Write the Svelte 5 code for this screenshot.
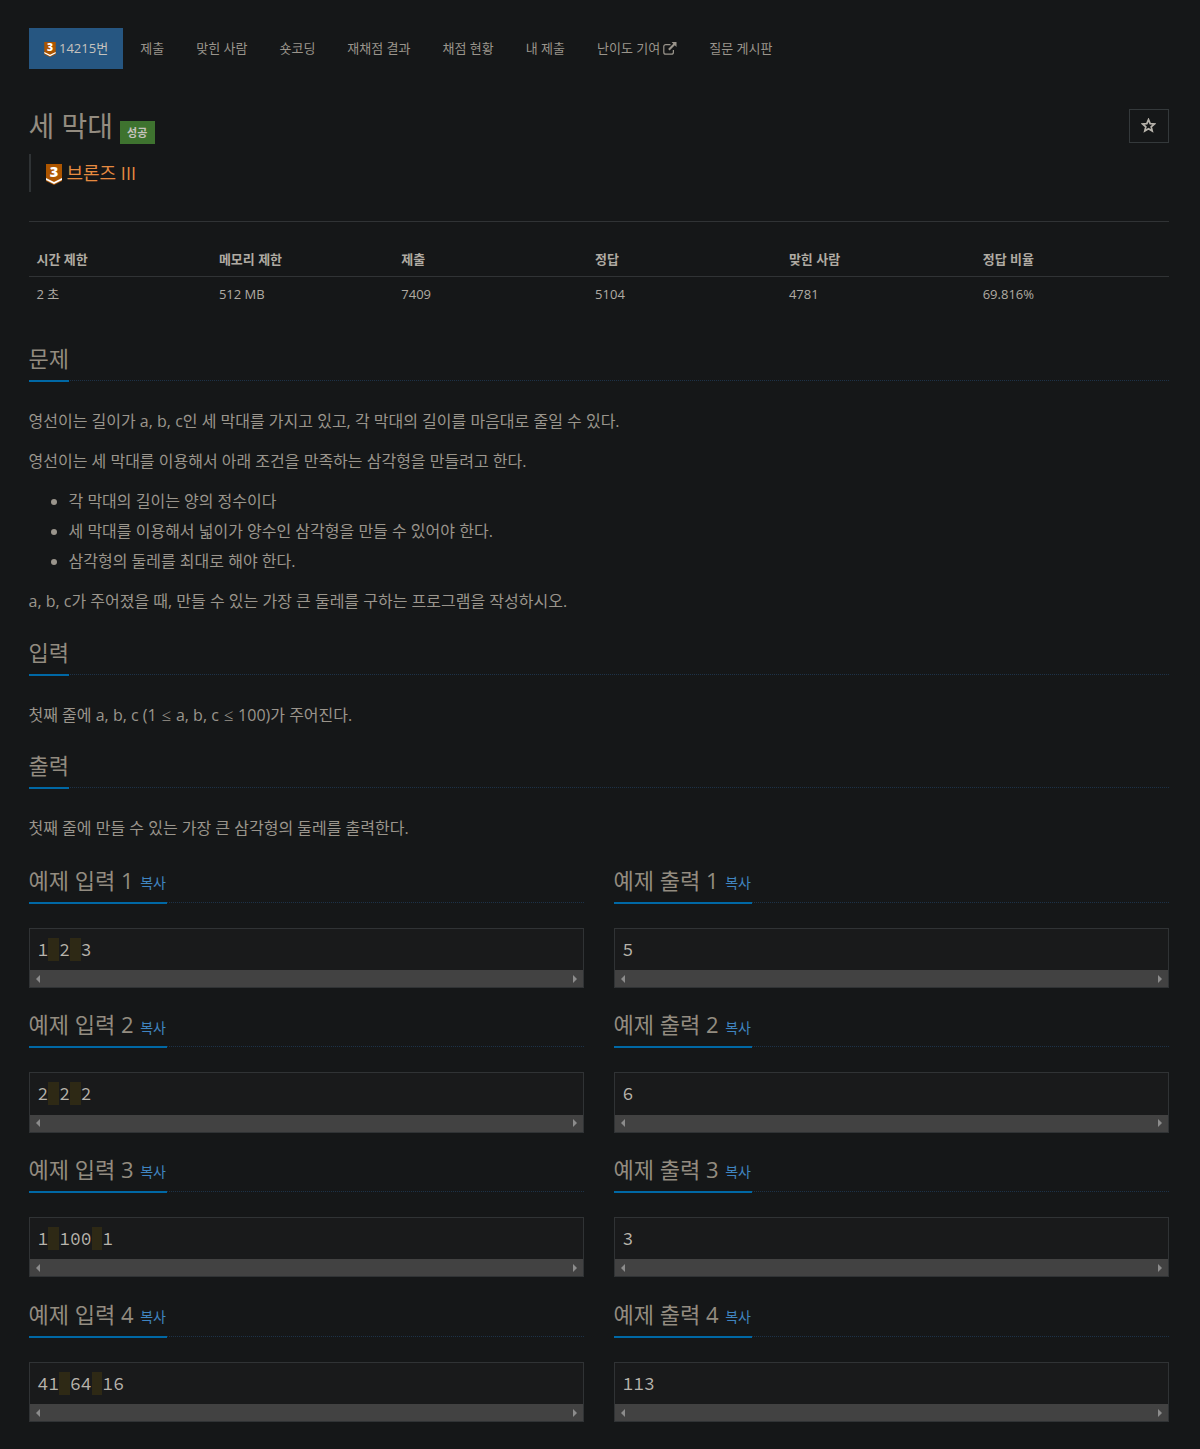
<script>
  const tabs = ['제출', '맞힌 사람', '숏코딩', '재채점 결과', '채점 현황', '내 제출'];
  const stats = [
    ['시간 제한', '2 초'],
    ['메모리 제한', '512 MB'],
    ['제출', '7409'],
    ['정답', '5104'],
    ['맞힌 사람', '4781'],
    ['정답 비율', '69.816%']
  ];
  const samples = [
    ['1 2 3', '5'],
    ['2 2 2', '6'],
    ['1 100 1', '3'],
    ['41 64 16', '113']
  ];
</script>

{#snippet tier()}
  <svg class="tier" viewBox="0 0 16 21">
    <path fill="#ad5600" d="M0 0h16v17l-8 4-8-4z" />
    <path fill="#fff" d="M0 14l8 4 8-4v1.9l-8 4-8-4z" />
    <text x="8" y="13.2" text-anchor="middle">3</text>
  </svg>
{/snippet}

{#snippet sample(kind, n, value)}
  <section class="sample">
    <div class="headline"><h2>예제 {kind} {n} <a>복사</a></h2></div>
    <div class="box">
      <pre>{#each value.split(' ') as part, i}{#if i > 0}<span class="space">{' '}</span>{/if}{part}{/each}</pre>
      <div class="scrollbar">
        <svg viewBox="0 0 4 8"><path d="M4 0v8L0 4z" /></svg>
        <svg viewBox="0 0 4 8"><path d="M0 0v8l4-4z" /></svg>
      </div>
    </div>
  </section>
{/snippet}

<main>
  <nav>
    <a class="active">{@render tier()}14215번</a>
    {#each tabs as tab}<a>{tab}</a>{/each}
    <a>난이도 기여
      <svg class="external" viewBox="0 0 14 13">
        <path d="M7.5 2.6H2.8a2 2 0 0 0-2 2v5.6a2 2 0 0 0 2 2h5.6a2 2 0 0 0 2-2V8" fill="none" stroke="currentColor" stroke-width="1.2" />
        <path d="M8.6 0H13.5v4.9l-1.7-1.7-5.2 5.2-1.5-1.5 5.2-5.2z" fill="currentColor" />
      </svg></a>
    <a>질문 게시판</a>
  </nav>

  <header>
    <h1>세 막대</h1>
    <span class="label">성공</span>
    <button aria-label="즐겨찾기">
      <svg viewBox="0 0 14 14"><path d="M7 1.5l1.55 3.7 4 .35-3.05 2.6.95 3.9L7 9.95l-3.45 2.1.95-3.9L1.45 5.55l4-.35z" fill="none" stroke="currentColor" stroke-width="1.6" /></svg>
    </button>
  </header>
  <blockquote>{@render tier()}브론즈 III</blockquote>
  <hr />

  <table>
    <thead><tr>{#each stats as [name]}<th>{name}</th>{/each}</tr></thead>
    <tbody><tr>{#each stats as [, value]}<td>{value}</td>{/each}</tr></tbody>
  </table>

  <section class="text">
    <div class="headline"><h2>문제</h2></div>
    <p>영선이는 길이가 a, b, c인 세 막대를 가지고 있고, 각 막대의 길이를 마음대로 줄일 수 있다.</p>
    <p>영선이는 세 막대를 이용해서 아래 조건을 만족하는 삼각형을 만들려고 한다.</p>
    <ul>
      <li>각 막대의 길이는 양의 정수이다</li>
      <li>세 막대를 이용해서 넓이가 양수인 삼각형을 만들 수 있어야 한다.</li>
      <li>삼각형의 둘레를 최대로 해야 한다.</li>
    </ul>
    <p>a, b, c가 주어졌을 때, 만들 수 있는 가장 큰 둘레를 구하는 프로그램을 작성하시오.</p>
  </section>
  <section class="text">
    <div class="headline"><h2>입력</h2></div>
    <p>첫째 줄에 a, b, c (1 <span class="math">≤</span> a, b, c <span class="math">≤</span> 100)가 주어진다.</p>
  </section>
  <section class="text output">
    <div class="headline"><h2>출력</h2></div>
    <p>첫째 줄에 만들 수 있는 가장 큰 삼각형의 둘레를 출력한다.</p>
  </section>

  <div class="samples">
    {#each samples as [input, output], i}
      {@render sample('입력', i + 1, input)}
      {@render sample('출력', i + 1, output)}
    {/each}
  </div>
</main>

<style>
  :global(body) {
    background: #151718;
  }
  main {
    box-sizing: border-box;
    width: 1200px;
    height: 1449px;
    overflow: hidden;
    padding: 28px 31.5px 0 28.5px;
    color: #b0aba3;
    font: 13px/20.8px 'Open Sans', 'Noto Sans CJK KR', sans-serif;
  }
  nav {
    display: flex;
    gap: 2px;
    height: 41px;
  }
  nav a {
    display: flex;
    align-items: center;
    padding: 0 15px;
    color: #9a958c;
    white-space: nowrap;
  }
  nav a.active {
    margin-right: 0.2px;
    background: #265681;
    color: #c6c3be;
  }
  .tier {
    flex: none;
    width: 16px;
    height: 21px;
    margin: 1px 4.5px 0 0;
    overflow: visible;
  }
  .tier text {
    fill: #fff;
    font: 800 14.5px/1 'Open Sans', sans-serif;
  }
  nav .tier {
    width: 12px;
    height: 15px;
    margin: 2px 3.5px 0 0;
  }
  .external {
    width: 14px;
    height: 13px;
    margin-left: 3px;
  }
  header {
    display: flex;
    height: 45px;
    margin-top: 40px;
  }
  h1 {
    margin: 0;
    font-size: 28px;
    line-height: 34px;
    font-weight: 400;
    color: #938c80;
  }
  .label {
    height: 23px;
    margin: 12px 0 0 6.5px;
    padding: 0 7.5px;
    background: #3e732f;
    color: #c6c3be;
    font-size: 11px;
    line-height: 23px;
    font-weight: 700;
  }
  button {
    box-sizing: border-box;
    display: grid;
    place-items: center;
    width: 40px;
    height: 34px;
    margin-left: auto;
    padding: 0 1px 2px 0;
    border: 1px solid #34393b;
    background: none;
    color: #b8b4ac;
  }
  button svg {
    width: 15px;
    height: 15px;
  }
  blockquote {
    box-sizing: border-box;
    display: flex;
    align-items: center;
    height: 38px;
    margin: 0;
    padding: 1px 0 0 15.5px;
    border-left: 2px solid #2f3335;
    color: #e58a40;
    font-size: 18px;
  }
  hr {
    height: 1px;
    margin: 29px 0 20px;
    border: 0;
    background: #303335;
  }
  table {
    width: 1140px;
    margin-bottom: 32px;
    border-collapse: collapse;
    table-layout: fixed;
  }
  th,
  td {
    box-sizing: border-box;
    width: 17%;
    height: 34px;
    padding: 1px 8px 0;
    text-align: left;
  }
  td {
    padding-top: 2px;
  }
  th:nth-child(-n + 2),
  td:nth-child(-n + 2) {
    width: 16%;
  }
  th {
    border-bottom: 1px solid #303335;
  }
  section.text {
    color: #9a958c;
    font-size: 16px;
    line-height: 30px;
  }
  .math {
    margin: 0 0.8px;
    font-family: 'Liberation Serif', serif;
    font-size: 17px;
    line-height: 1;
  }
  .headline {
    display: flex;
    height: 38px;
    margin-bottom: 25px;
    border-bottom: 1px dotted #1d3248;
  }
  h2 {
    box-sizing: border-box;
    height: 40px;
    margin: 0;
    border-bottom: 2px solid #0068a5;
    color: #938c80;
    font-size: 22px;
    font-weight: 400;
    line-height: 32px;
    white-space: pre;
  }
  h2 a {
    padding: 0 1px;
    color: #4085c0;
    font-size: 14px;
    vertical-align: 0.5px;
  }
  p,
  ul {
    margin: 0 0 10px;
  }
  ul {
    padding-left: 40px;
  }
  section.text + section.text {
    margin-top: 20px;
  }
  section.text + section.output {
    margin-top: 19px;
  }
  .samples {
    display: grid;
    grid-template-columns: 555px 555px;
    column-gap: 30px;
    row-gap: 20.2px;
    margin-top: 20.6px;
  }
  .box {
    box-sizing: border-box;
    height: 60.5px;
    border: 1px solid #303335;
    background: #191a1b;
  }
  pre {
    box-sizing: border-box;
    height: 41.5px;
    margin: 0;
    padding: 0 8px;
    color: #b8b4ac;
    font: 18px/42.4px 'Source Code Pro', 'Liberation Mono', monospace;
  }
  .space {
    background: #2e2915;
  }
  .scrollbar {
    display: flex;
    align-items: center;
    justify-content: space-between;
    height: 17px;
    padding: 0 6px;
    background: #424242;
  }
  .scrollbar svg {
    width: 4px;
    height: 8px;
    fill: #8c8c8c;
  }
</style>
